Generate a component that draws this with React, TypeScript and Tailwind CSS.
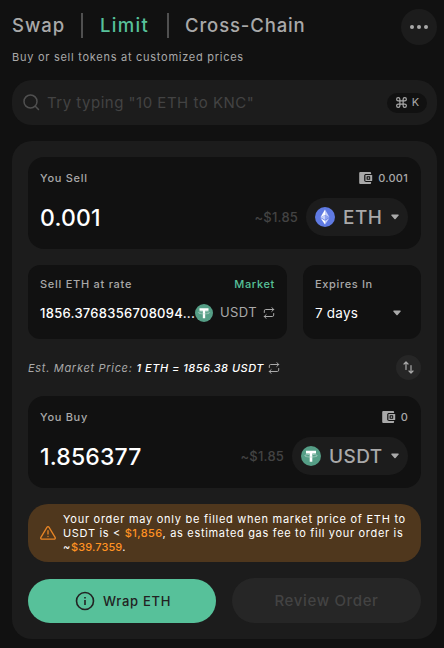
import type { ReactNode } from "react";

function Wallet() {
  return (
    <svg width="14" height="14" viewBox="0 0 14 14" fill="none" className="shrink-0">
      <path d="M1.600 1H10.800c.9 0 1.300.4 1.300 1.200v.8H7.200C6 3 5.200 3.700 5.200 4.700v4.600c0 1 .8 1.700 2 1.700h4.900v.8c0 .8-.4 1.200-1.300 1.200H1.600C.7 13 .2 12.600.2 11.800V2.200C.2 1.400.7 1 1.600 1Z" fill="#a9a9a9" />
      <rect x="6.400" y="4" width="6.800" height="6" rx=".6" fill="#a9a9a9" />
      <rect x="7.600" y="5.200" width="3.600" height="3.600" rx=".5" fill="#111" />
      <rect x="8.700" y="6.300" width="1.500" height="1.500" fill="#a9a9a9" />
    </svg>
  );
}

function Tether({ size }: { size: number }) {
  return (
    <svg width={size} height={size} viewBox="0 0 20 20" className="shrink-0">
      <circle cx="10" cy="10" r="10" fill="#559e86" />
      <path d="M5 4.800h10v2.700h-3.700v8.300H8.700V7.500H5Z" fill="#fff" />
      <path d="M8.500 8.400C5.700 8.600 3.800 9 3.800 9.700s2.600 1.300 6.200 1.300 6.200-.6 6.200-1.300-1.900-1.100-4.700-1.300" fill="none" stroke="#b9d8ce" strokeWidth=".7" />
    </svg>
  );
}

function Ether() {
  return (
    <svg width="20" height="20" viewBox="0 0 20 20" className="shrink-0">
      <circle cx="10" cy="10" r="10" fill="#5f7ae2" />
      <path d="M10 2.500v5.600l4.500 2.100Z" fill="#c5cff8" />
      <path d="M10 2.500 5.500 10.200 10 8.100Z" fill="#fff" />
      <path d="M10 8.100v4.800l4.500-2.700Z" fill="#8fa3f0" />
      <path d="M5.500 10.200 10 12.900V8.100Z" fill="#c5cff8" />
      <path d="M10 13.800v3.700l4.500-6.400Z" fill="#c5cff8" />
      <path d="M10 17.500v-3.700l-4.500-2.700Z" fill="#fff" />
    </svg>
  );
}

function Caret() {
  return (
    <svg width="8" height="6" viewBox="0 0 8 6" className="shrink-0">
      <path d="M1 .4h6c.8 0 1.100.7.6 1.200L4.600 5a.8.8 0 0 1-1.200 0L.4 1.600C-.1 1.100.2.4 1 .4Z" fill="#a9a9a9" />
    </svg>
  );
}

function Repeat() {
  return (
    <svg width="12" height="12" viewBox="0 0 12 12" fill="none" stroke="#a9a9a9" strokeWidth="1" strokeLinecap="round" strokeLinejoin="round" className="shrink-0">
      <path d="M8.800.6 10.800 2.500 8.800 4.400M10.800 2.500H2.700c-.9 0-1.400.5-1.400 1.400v1.600M3.200 7.600l-2 1.900 2 1.900M1.200 9.500h8.100c.9 0 1.400-.5 1.400-1.400V6.500" />
    </svg>
  );
}

type CardProps = {
  label: string;
  balance: string;
  amount: ReactNode;
  fiat: string;
  children: ReactNode;
};

function TokenCard({ label, balance, amount, fiat, children }: CardProps) {
  return (
    <section className="h-[92px] rounded-2xl bg-[#111] pt-[13px] pr-[13px] pl-3">
      <div className="flex h-4 items-center justify-between text-[11px] font-[450] text-[#a9a9a9]">
        <span className="tracking-[0.7px]">{label}</span>
        <span className="flex items-center gap-[5px] tracking-[0.25px]">
          <Wallet />
          {balance}
        </span>
      </div>
      <div className="mt-3 flex h-[38px] items-center">
        {amount}
        <span className="mr-2 ml-auto pt-0.5 text-[13px] font-[450] tracking-[0.2px] text-[#434343]">{fiat}</span>
        {children}
      </div>
    </section>
  );
}

export default function App() {
  return (
    <main className="h-[648px] w-[444px] overflow-hidden bg-[#111] pr-[7px] pl-3 font-['Inter','Liberation_Sans',sans-serif] whitespace-nowrap text-[#a9a9a9]">
      <header className="flex h-[46px] items-start justify-between pt-[9px]">
        <nav className="mt-[3px] flex h-[26px] items-center text-[18.5px] font-[450]">
          <span className="w-[69px] pt-px tracking-[0.95px]">Swap</span>
          <span className="h-[25px] w-0.5 bg-[#505050]" />
          <span className="w-[84px] pt-px pl-[17px] tracking-[1.3px] text-[#57c19a]">Limit</span>
          <span className="h-[25px] w-0.5 bg-[#505050]" />
          <span className="pt-px pl-4 tracking-[0.87px]">Cross-Chain</span>
        </nav>
        <button className="flex size-9 items-center justify-center gap-[3px] rounded-full bg-[#1c1c1c]">
          <i className="size-1 rounded-full bg-[#a9a9a9]" />
          <i className="size-1 rounded-full bg-[#a9a9a9]" />
          <i className="size-1 rounded-full bg-[#a9a9a9]" />
        </button>
      </header>
      <p className="mt-[3px] h-4 text-[11px] leading-4 tracking-[0.73px]">Buy or sell tokens at customized prices</p>

      <div className="mt-[15px] flex h-[45px] items-center rounded-[20px] bg-[#1c1c1c] pr-[10px] pl-[11px]">
        <svg width="17" height="17" viewBox="0 0 17 17" fill="none" stroke="#505050" strokeWidth="1.500" strokeLinecap="round">
          <circle cx="7.500" cy="7.500" r="6.500" />
          <path d="m12.300 12.300 3.200 3.200" />
        </svg>
        <span className="mt-0.5 ml-[7px] text-[15px] tracking-[0.5px] text-[#434343]">Try typing "10 ETH to KNC"</span>
        <span className="ml-auto flex h-5 w-10 items-center justify-center gap-1 rounded-full bg-[#111] text-[11px]">
          <svg width="13" height="13" viewBox="0 0 24 24" fill="none" stroke="#a9a9a9" strokeWidth="2.200">
            <path d="M15 6v12a3 3 0 1 0 3-3H6a3 3 0 1 0 3 3V6a3 3 0 1 0-3 3h12a3 3 0 1 0-3-3" />
          </svg>
          K
        </span>
      </div>

      <div className="mt-4 h-[498px] rounded-[20px] bg-[#1c1c1c] p-4">
        <TokenCard label="You Sell" balance="0.001" fiat="~$1.85" amount={<span className="pt-0.5 text-[23px] font-[450] tracking-[0.2px] text-white">0.001</span>}>
          <button className="flex h-[38px] w-[102px] items-center rounded-full bg-[#1c1c1c] pr-[9px] pl-[9px]">
            <Ether />
            <span className="ml-2 pt-0.5 text-[19px] font-[450] tracking-[0.5px]">ETH</span>
            <span className="ml-auto"><Caret /></span>
          </button>
        </TokenCard>

        <div className="mt-4 flex gap-4">
          <section className="h-[74px] w-[259px] rounded-xl bg-[#111] px-3 pt-[11px]">
            <div className="flex h-4 items-center justify-between text-[11px] font-[450]">
              <span className="tracking-[0.73px]">Sell ETH at rate</span>
              <span className="tracking-[0.65px] text-[#57c19a]">Market</span>
            </div>
            <div className="mt-3 flex h-[18px] items-center">
              <span className="w-[155px] pt-0.5 text-[13px] font-medium tracking-[0.28px] text-white">1856.3768356708094...</span>
              <Tether size={18} />
              <span className="ml-[7px] text-[13px] tracking-[0.4px]">USDT</span>
              <span className="ml-auto"><Repeat /></span>
            </div>
          </section>
          <section className="h-[74px] w-[118px] rounded-xl bg-[#111] pt-[11px] pr-5 pl-3">
            <div className="h-4 text-[11px] leading-4 font-[450] tracking-[0.65px]">Expires In</div>
            <div className="mt-3 flex h-[18px] items-center justify-between text-[13.500px] text-white">
              <span className="pt-px tracking-[0.2px]">7 days</span>
              <Caret />
            </div>
          </section>
        </div>

        <div className="mt-4 flex h-[25px] items-center text-[11px] italic">
          <span className="pt-px font-[450] tracking-[0.7px]">Est. Market Price:</span>
          <span className="mr-1 ml-1 pt-px font-medium tracking-[0.5px] text-white">1 ETH = 1856.38 USDT</span>
          <Repeat />
          <button className="ml-auto flex size-[25px] items-center justify-center rounded-full bg-[#262626]">
            <svg width="11" height="13" viewBox="0 0 11 13" fill="none" stroke="#a9a9a9" strokeWidth="1.200" strokeLinecap="round" strokeLinejoin="round">
              <path d="M3 8.500V1M1 3l2-2 2 2M8 4.500V12M6 10l2 2 2-2" />
            </svg>
          </button>
        </div>

        <div className="mt-4">
          <TokenCard label="You Buy" balance="0" fiat="~$1.85" amount={<span className="pt-0.5 text-[23px] font-[450] tracking-[0.15px] text-white">1.856377</span>}>
            <button className="flex h-[38px] w-[116px] items-center rounded-full bg-[#1c1c1c] pr-[9px] pl-[9px]">
              <Tether size={20} />
              <span className="ml-2 pt-0.5 text-[19px] font-[450] tracking-[0.45px]">USDT</span>
              <span className="ml-auto"><Caret /></span>
            </button>
          </TokenCard>
        </div>

        <div className="mt-4 flex h-[58px] items-center rounded-[20px] bg-[#4f371d] pl-3">
          <svg width="16" height="14" viewBox="0 0 16 14" fill="none" stroke="#e88526" strokeWidth="1.300" strokeLinecap="round" strokeLinejoin="round">
            <path d="M6.900 1.300.9 11.400c-.5.900 0 1.800 1.100 1.800h12c1.100 0 1.600-.9 1.100-1.800l-6-10.100c-.5-.8-1.700-.8-2.200 0ZM8 4.700v3.300M8 10.500v.1" />
          </svg>
          <p className="ml-[7px] text-[11px] leading-[14px] tracking-[0.73px] text-white">
            Your order may only be filled when market price of ETH to
            <br />
            <span className="tracking-[0.68px]">USDT is &lt; <b className="font-medium tracking-[0.4px] text-[#ff9223]">$1,856</b>, as estimated gas fee to fill your order is</span>
            <br />
            ~<b className="font-medium tracking-[0.1px] text-[#ff9223]">$39.7359</b>.
          </p>
        </div>

        <div className="mt-4 flex items-end gap-4">
          <button className="flex h-11 w-[188px] items-center justify-center gap-2 rounded-full bg-[#57c19a] pl-0.5 text-[13px] font-medium text-[#222]">
            <svg width="20" height="20" viewBox="0 0 20 20" fill="none" stroke="#222" strokeWidth="1.600">
              <circle cx="10" cy="10" r="8.500" />
              <path d="M10 9v5M10 6v1.600" />
            </svg>
            <span className="pt-px tracking-[0.7px]">Wrap ETH</span>
          </button>
          <button className="h-[45px] w-[189px] rounded-full bg-[#262626] pt-0.5 text-[15px] font-medium tracking-[0.65px] text-[#434343]">Review Order</button>
        </div>
      </div>
    </main>
  );
}
